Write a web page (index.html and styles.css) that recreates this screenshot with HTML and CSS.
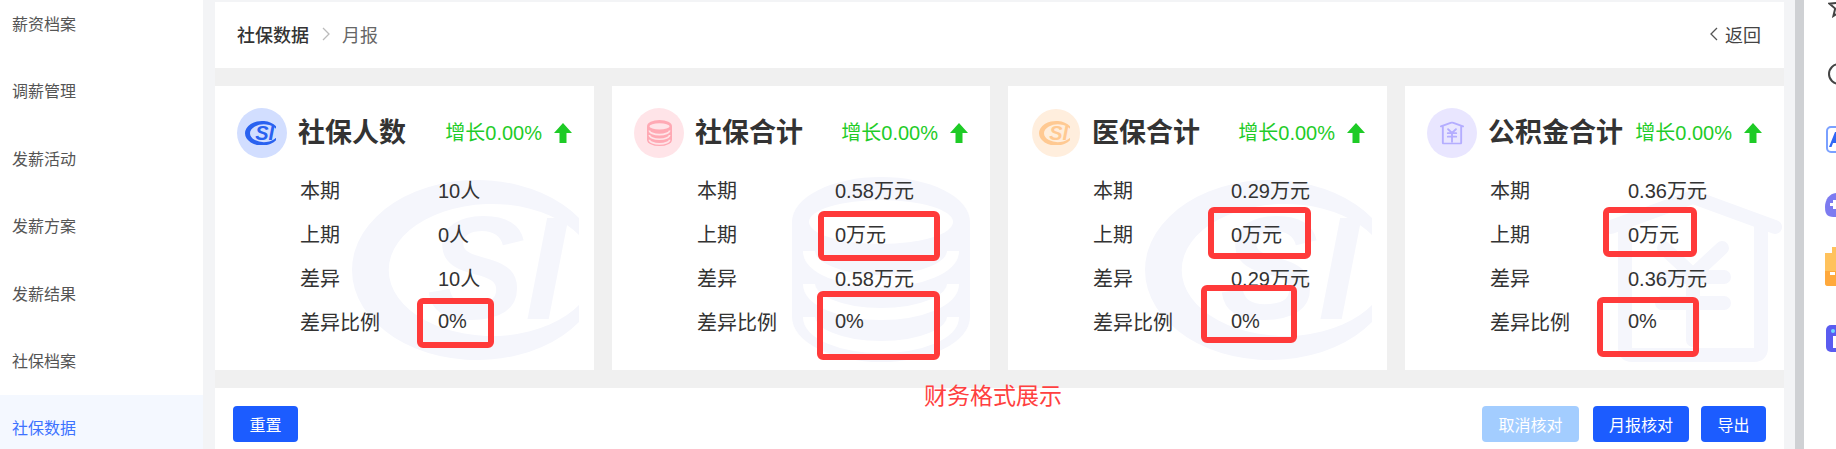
FILE: index.html
```html
<!DOCTYPE html>
<html lang="zh-CN">
<head>
<meta charset="utf-8">
<title>社保数据</title>
<link rel="stylesheet" href="styles.css">
</head>
<body>
<svg class="defs" width="0" height="0">
    <symbol id="si" viewBox="0 0 250 180">
        <path d="M228 39A125 90 0 1 0 228 141L228 124A103 66 0 1 1 228 56Z"/>
    </symbol>
    <symbol id="db" viewBox="0 0 178 185">
        <path d="M0 45A89 45 0 0 1 178 45V140A89 45 0 0 1 0 140Z"/>
        <ellipse cx="89" cy="45" rx="72" ry="22" class="cut-fill"/>
        <path d="M17 74A72 30 0 0 0 161 74M17 107A72 30 0 0 0 161 107M17 140A72 30 0 0 0 161 140" class="cut-line"/>
    </symbol>
    <symbol id="house" viewBox="0 0 178 172">
        <path d="M7 37L89 7L171 37M21 37V158Q21 165 28 165H150Q157 165 157 158V37M60 58L89 85L118 58M58 87H120M58 113H120M89 85V150" class="house-line"/>
    </symbol>
    <symbol id="arrow" viewBox="0 0 18 20">
        <path d="M9 0L18 10H12.5V20H5.5V10H0Z"/>
    </symbol>
</svg>

<aside class="sidebar">
    <ul class="menu">
        <li>薪资档案</li>
        <li>调薪管理</li>
        <li>发薪活动</li>
        <li>发薪方案</li>
        <li>发薪结果</li>
        <li>社保档案</li>
        <li class="active">社保数据</li>
    </ul>
</aside>

<main class="content">
    <header class="topbar">
        <div class="crumbs">
            <strong>社保数据</strong>
            <svg class="crumb-sep" viewBox="0 0 8 14"><path d="M1 1L7 7L1 13"/></svg>
            <span>月报</span>
        </div>
        <div class="back">
            <svg class="back-icon" viewBox="0 0 8 14"><path d="M7 1L1 7L7 13"/></svg>
            <span>返回</span>
        </div>
    </header>

    <section class="cards">
        <article class="card">
            <svg class="wm wm-si" viewBox="0 0 227 180"><use href="#si" width="250" height="180"/><text x="75" y="139" class="si-text">SI</text></svg>
            <div class="card-head">
                <span class="icon icon-blue"><svg class="icon-si" viewBox="0 0 250 180"><use href="#si"/><text x="75" y="139" class="si-text">SI</text></svg></span>
                <h2>社保人数</h2>
                <div class="trend">增长0.00%<svg class="arrow"><use href="#arrow"/></svg></div>
            </div>
            <dl class="rows">
                <dt>本期</dt><dd>10人</dd>
                <dt>上期</dt><dd>0人</dd>
                <dt>差异</dt><dd>10人</dd>
                <dt>差异比例</dt><dd>0%</dd>
            </dl>
            <i class="mark mark-1a"></i>
        </article>

        <article class="card card-narrow">
            <svg class="wm wm-db" viewBox="0 0 178 185"><use href="#db"/></svg>
            <div class="card-head">
                <span class="icon icon-pink"><svg class="icon-db" viewBox="0 0 178 185"><use href="#db"/></svg></span>
                <h2>社保合计</h2>
                <div class="trend">增长0.00%<svg class="arrow"><use href="#arrow"/></svg></div>
            </div>
            <dl class="rows">
                <dt>本期</dt><dd>0.58万元</dd>
                <dt>上期</dt><dd>0万元</dd>
                <dt>差异</dt><dd>0.58万元</dd>
                <dt>差异比例</dt><dd>0%</dd>
            </dl>
            <i class="mark mark-2a"></i>
            <i class="mark mark-2b"></i>
        </article>

        <article class="card card-med">
            <svg class="wm wm-si" viewBox="0 0 227 180"><use href="#si" width="250" height="180"/><text x="75" y="139" class="si-text">SI</text></svg>
            <div class="card-head">
                <span class="icon icon-orange"><svg class="icon-si" viewBox="0 0 250 180"><use href="#si"/><text x="75" y="139" class="si-text">SI</text></svg></span>
                <h2>医保合计</h2>
                <div class="trend">增长0.00%<svg class="arrow"><use href="#arrow"/></svg></div>
            </div>
            <dl class="rows">
                <dt>本期</dt><dd>0.29万元</dd>
                <dt>上期</dt><dd>0万元</dd>
                <dt>差异</dt><dd>0.29万元</dd>
                <dt>差异比例</dt><dd>0%</dd>
            </dl>
            <i class="mark mark-3a"></i>
            <i class="mark mark-3b"></i>
        </article>

        <article class="card">
            <svg class="wm wm-house" viewBox="0 0 178 172"><use href="#house"/></svg>
            <div class="card-head">
                <span class="icon icon-violet"><svg class="icon-house" viewBox="0 0 178 172"><use href="#house"/></svg></span>
                <h2>公积金合计</h2>
                <div class="trend">增长0.00%<svg class="arrow"><use href="#arrow"/></svg></div>
            </div>
            <dl class="rows">
                <dt>本期</dt><dd>0.36万元</dd>
                <dt>上期</dt><dd>0万元</dd>
                <dt>差异</dt><dd>0.36万元</dd>
                <dt>差异比例</dt><dd>0%</dd>
            </dl>
            <i class="mark mark-4a"></i>
            <i class="mark mark-4b"></i>
        </article>
    </section>

    <footer class="toolbar">
        <button class="btn btn-reset">重置</button>
        <span class="note">财务格式展示</span>
        <div class="actions">
            <button class="btn btn-off">取消核对</button>
            <button class="btn btn-month">月报核对</button>
            <button class="btn">导出</button>
        </div>
    </footer>
</main>

<div class="scrollbar"></div>

<nav class="rail">
    <svg class="rail-star" viewBox="0 0 24 24"><path d="M12 2L15 9L22.5 9.7L16.8 14.6L18.6 22L12 18L5.4 22L7.2 14.6L1.5 9.7L9 9Z"/></svg>
    <svg class="rail-clock" viewBox="0 0 22 22"><circle cx="11" cy="11" r="10"/></svg>
    <svg class="rail-doc" viewBox="0 0 27 27"><rect x="1" y="1" width="25" height="25" rx="4" class="doc-box"/><path d="M3 21L9 6H13L15 21H12L11.500 17H7L5.500 21Z" class="doc-a"/></svg>
    <svg class="rail-blob" viewBox="0 0 26 24"><path d="M12 0C20 0 26 5 26 12C26 19 20 24 12 24C4 24 0 24 0 14C0 6 5 0 12 0Z" class="blob"/><path d="M8 7V10H5V13H8V16H11V13H14V10H11V7Z" class="white"/></svg>
    <svg class="rail-box" viewBox="0 0 26 39"><path d="M7 0H19V6H26V39H3Q0 39 0 36V6H7Z" class="box"/><path d="M0 24H26V39H3Q0 39 0 36Z" class="box-low"/><path d="M5 25H10V28H5Z" class="white"/></svg>
    <svg class="rail-info" viewBox="0 0 27 27"><rect width="27" height="27" rx="5" class="info"/><rect x="7" y="11" width="4" height="12" class="white"/><circle cx="7" cy="6" r="2" class="info-dot"/></svg>
</nav>
</body>
</html>
```

FILE: styles.css
```css
* {
    box-sizing: border-box;
}

html, body {
    height: 449px;
    overflow: hidden;
}

body {
    margin: 0;
    display: flex;
    background: #f3f4f6;
    color: #333;
    font-family: "Liberation Sans", "Noto Sans CJK SC", sans-serif;
}

.defs {
    position: absolute;
}

.si-text {
    font-family: "Liberation Sans", sans-serif;
    font-size: 147px;
    font-weight: bold;
    font-style: italic;
}

/* sidebar */

.sidebar {
    flex: 0 0 203px;
    background: #fff;
    overflow: hidden;
}

.menu {
    list-style: none;
    margin: -9px 0 0;
    padding: 0;
}

.menu li {
    height: 67.4px;
    line-height: 67.4px;
    padding-left: 12px;
    font-size: 16px;
    color: #555;
}

.menu li.active {
    background: #f4f8ff;
    color: #3d72ff;
}

/* main column */

.content {
    flex: 0 0 1569px;
    margin: 2px 0 0 12px;
    background: #f0f0f0;
    display: flex;
    flex-direction: column;
    gap: 18px;
}

.topbar {
    flex: 0 0 66px;
    padding: 0 23px 2px 22px;
    background: #fff;
    display: flex;
    align-items: center;
    justify-content: space-between;
    font-size: 18px;
}

.crumbs, .back {
    display: flex;
    align-items: center;
}

.crumbs strong {
    font-weight: 500;
}

.crumbs span {
    color: #666;
}

.crumb-sep, .back-icon {
    width: 8px;
    height: 14px;
    fill: none;
    stroke: #bbb;
    stroke-width: 1.3;
}

.crumb-sep {
    margin: 0 12px 0 13px;
}

.back-icon {
    margin-right: 7px;
    stroke: #555;
}

.back {
    color: #444;
}

/* cards */

.cards {
    display: flex;
    gap: 18px;
}

.card {
    position: relative;
    flex: 0 0 379px;
    height: 284px;
    padding: 22px 22px 0 22px;
    background: #fff;
    overflow: hidden;
}

.card-narrow {
    flex-basis: 378px;
}

.card-head {
    position: relative;
    display: flex;
    align-items: center;
    height: 50px;
}

.icon {
    flex: none;
    width: 50px;
    height: 50px;
    margin-right: 11px;
    border-radius: 50%;
    display: flex;
    align-items: center;
    justify-content: center;
}

.card-med .icon {
    width: 48px;
    height: 48px;
    margin: 0 12px 0 2px;
}

.icon-blue {
    background: #d2deff;
    fill: #2a62f0;
}

.icon-orange {
    background: #ffeedd;
    fill: #ffc992;
}

.icon-pink {
    background: #ffe4e8;
    fill: #ffa9b4;
    --cut: #ffe4e8;
}

.icon-violet {
    background: #e9e6ff;
    --line: #b4adff;
}

.icon-si {
    width: 34px;
    height: 24.500px;
}

.icon-db {
    width: 25px;
    height: 26px;
}

.icon-house {
    width: 24px;
    height: 24px;
}

.cut-fill {
    fill: var(--cut, #fff);
}

.cut-line {
    fill: none;
    stroke: var(--cut, #fff);
    stroke-width: 12;
}

.house-line {
    fill: none;
    stroke: var(--line, #f5f6fc);
    stroke-width: 14;
    stroke-linecap: round;
    stroke-linejoin: round;
}

.card-head h2 {
    margin: 0;
    font-size: 27px;
    font-weight: 700;
    line-height: 36px;
    white-space: nowrap;
}

.trend {
    margin-left: auto;
    padding-bottom: 3px;
    display: flex;
    align-items: center;
    color: #1fcc29;
    font-size: 20px;
    white-space: nowrap;
}

.arrow {
    width: 18px;
    height: 20px;
    margin: 3px 0 0 12px;
    fill: #1ecb26;
}

.rows {
    position: relative;
    display: grid;
    grid-template-columns: 138px 1fr;
    grid-auto-rows: 44px;
    align-items: center;
    margin: 9px 0 0 63px;
    font-size: 20px;
}

.rows dt, .rows dd {
    margin: 0;
}

/* big pale shapes behind the rows */

.wm {
    position: absolute;
    fill: #f5f6fc;
}

.wm-si {
    left: 137px;
    top: 94px;
    width: 227px;
    height: 180px;
}

.wm-db {
    left: 180px;
    top: 91px;
    width: 178px;
    height: 185px;
}

.wm-house {
    left: 199px;
    top: 104px;
    width: 178px;
    height: 172px;
}

/* red review marks drawn over the screenshot */

.mark {
    position: absolute;
    border: 6px solid #ff3a3a;
    border-radius: 6px;
}

.mark-1a { left: 202px; top: 212px; width: 77px; height: 50px; }
.mark-2a { left: 206px; top: 125px; width: 122px; height: 50px; }
.mark-2b { left: 205px; top: 205px; width: 123px; height: 69px; }
.mark-3a { left: 200px; top: 121px; width: 103px; height: 52px; }
.mark-3b { left: 193px; top: 199px; width: 96px; height: 58px; }
.mark-4a { left: 198px; top: 121px; width: 94px; height: 50px; }
.mark-4b { left: 192px; top: 211px; width: 102px; height: 60px; }

/* toolbar */

.toolbar {
    position: relative;
    flex: 1;
    padding: 18px 18px 0;
    background: #fff;
    display: flex;
    align-items: flex-start;
    justify-content: space-between;
}

.actions {
    display: flex;
    gap: 12px;
}

.btn {
    height: 36px;
    padding: 0 16.500px;
    border: 0;
    border-radius: 4px;
    background: #1c5cff;
    color: #fff;
    font-family: inherit;
    font-size: 16px;
}

.btn-off {
    background: #a3cdff;
    margin-right: 2px;
}

.btn-month {
    padding: 0 16px;
}

.note {
    position: absolute;
    left: 709px;
    top: -7px;
    color: #ff4040;
    font-size: 23px;
    line-height: 30px;
}

/* right edge */

.scrollbar {
    flex: 0 0 9px;
    margin-left: 11px;
    background: #cfd1d4;
}

.rail {
    flex: 1;
    min-width: 0;
    padding-left: 22px;
    background: #fff;
    overflow: hidden;
    display: flex;
    flex-direction: column;
    align-items: flex-start;
}

.rail svg {
    flex: none;
}

.rail-star {
    width: 24px;
    height: 24px;
    margin: -6px 0 0 2px;
    fill: none;
    stroke: #444;
    stroke-width: 2;
}

.rail-clock {
    width: 22px;
    height: 22px;
    margin: 45px 0 0 2px;
    fill: none;
    stroke: #444;
    stroke-width: 2;
}

.rail-doc {
    width: 27px;
    height: 27px;
    margin-top: 41px;
}

.doc-box {
    fill: #fff;
    stroke: #7aa0ff;
    stroke-width: 2;
}

.doc-a {
    fill: #2f66f5;
}

.rail-blob {
    width: 26px;
    height: 24px;
    margin: 40px 0 0 -1px;
}

.blob {
    fill: #7d7bf0;
}

.white {
    fill: #fff;
}

.rail-box {
    width: 26px;
    height: 39px;
    margin: 30px 0 0 -1px;
}

.box {
    fill: #ffc25c;
}

.box-low {
    fill: #ffa93c;
}

.rail-info {
    width: 27px;
    height: 27px;
    margin-top: 39px;
}

.info {
    fill: #5a5cf0;
}

.info-dot {
    fill: #6fd8ff;
}
```
